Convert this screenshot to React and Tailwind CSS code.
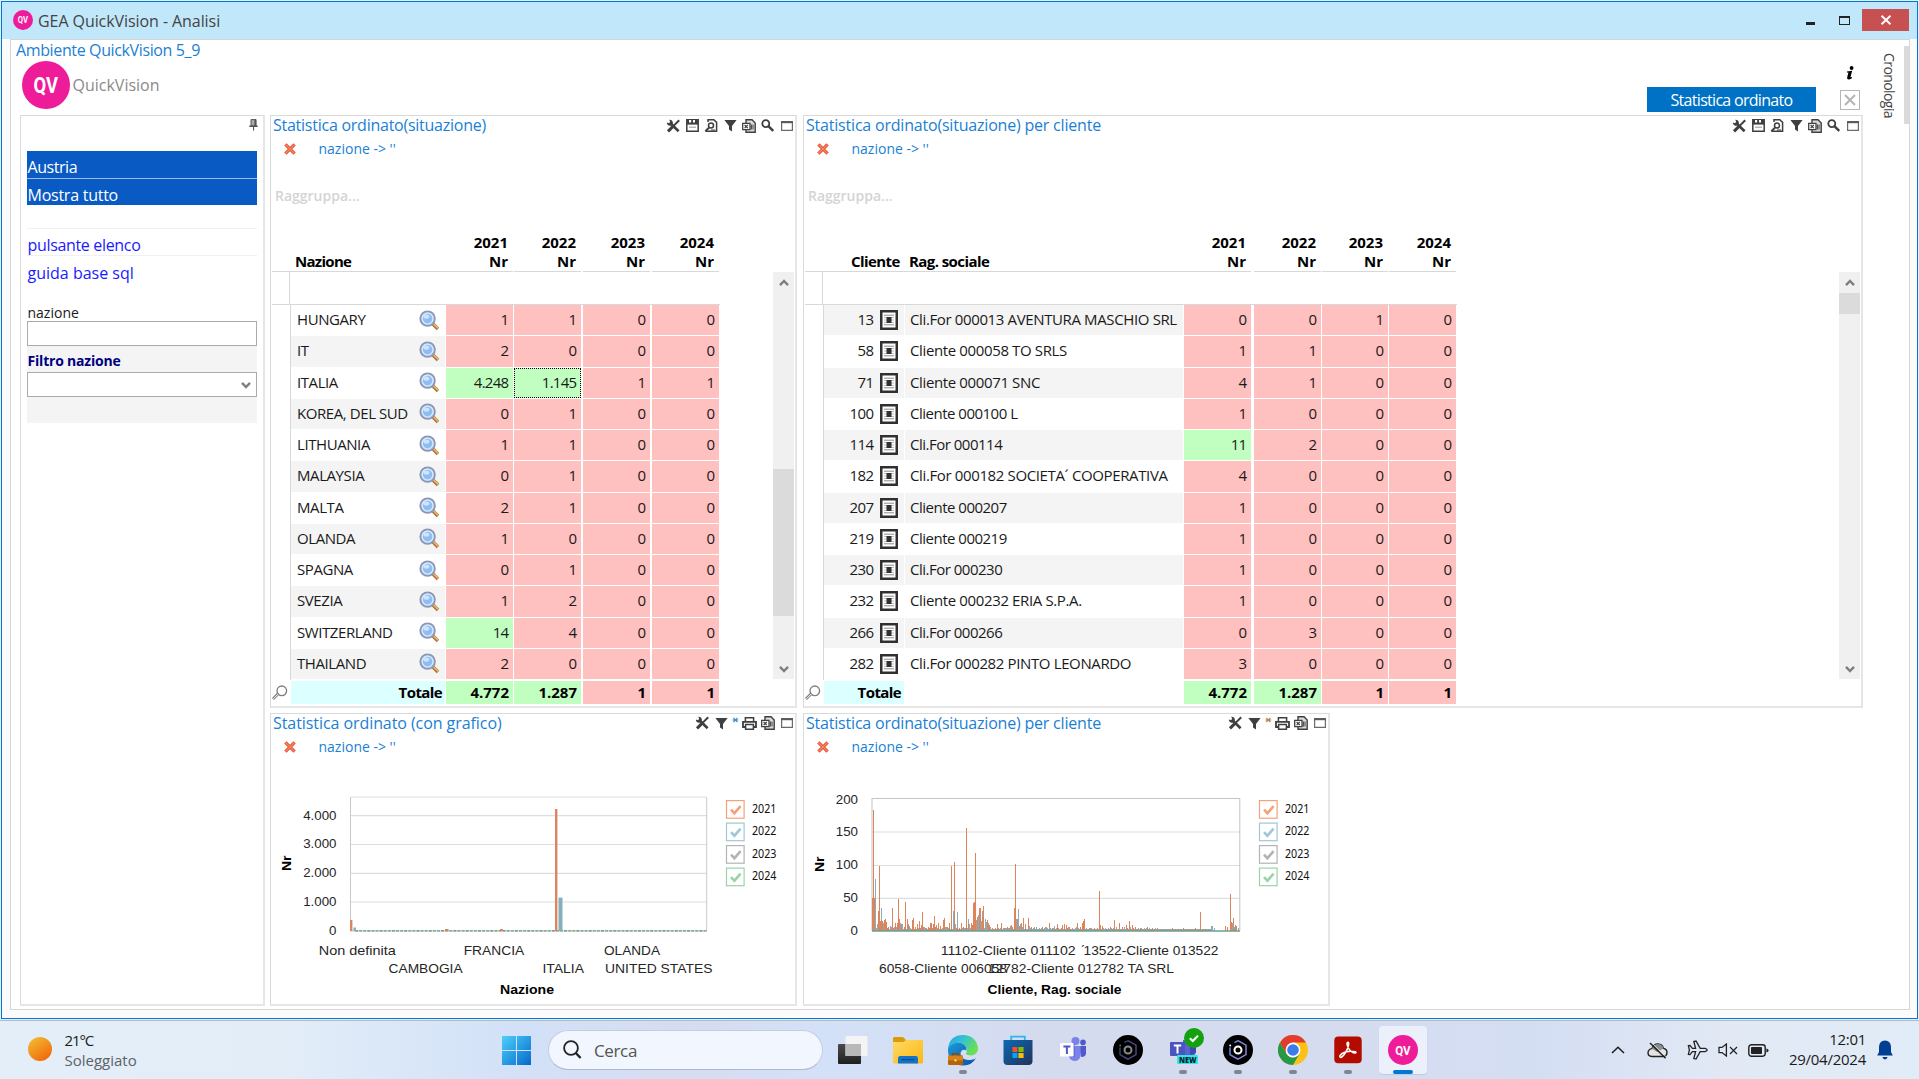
import React from "react";

const UI = "font-['Open_Sans','Noto_Sans',sans-serif]";

/* ---------- small toolbar glyphs ---------- */
const G = "#3f3f3f";
const Tools = () => (
  <svg width="15" height="14" viewBox="0 0 15 14">
    <path d="M13.2 1.2 L7.8 6.6" stroke={G} strokeWidth="2" />
    <path d="M6.8 7.6 L2 12.4" stroke={G} strokeWidth="3" />
    <path d="M4.2 4 L12.6 12.2" stroke={G} strokeWidth="2.6" />
    <path d="M3.2 .8 A3 3 0 1 1 .9 3.4 L3 4.2 L4.2 2.8Z" fill={G} />
  </svg>
);
const Save = () => (
  <svg width="13" height="13" viewBox="0 0 13 13">
    <path d="M.8 .8H12.2V12.2H.8Z" fill="#fff" stroke={G} strokeWidth="1.5" />
    <path d="M1 1H12V5.6H1Z" fill={G} />
    <path d="M3 1h2.2v2.6H3zM7 1h2v2.6H7z" fill="#fff" />
    <path d="M3 8.2h7" stroke="#999" />
  </svg>
);
const Preview = () => (
  <svg width="14" height="13" viewBox="0 0 14 13">
    <path d="M4 3V.8H9.8L12.6 3.4V12.2H1.5" fill="none" stroke={G} strokeWidth="1.5" />
    <circle cx="7" cy="6.6" r="2.5" fill="#fff" stroke={G} strokeWidth="1.5" />
    <path d="M5 8.6 L1.4 12.2" stroke={G} strokeWidth="2" />
    <path d="M7 11h4" stroke={G} />
  </svg>
);
const Funnel = () => (
  <svg width="13" height="13" viewBox="0 0 13 13">
    <path d="M.4 1H12.6L8 7V12.6L5 10.6V7Z" fill={G} />
  </svg>
);
const Xls = () => (
  <svg width="14" height="14" viewBox="0 0 14 14">
    <path d="M4 4V.8H10L13.2 4V13.2H4V11" fill="#ddd" stroke={G} strokeWidth="1.4" />
    <path d="M.7 4.4H8V10.6H.7Z" fill="#fff" stroke={G} strokeWidth="1.3" />
    <path d="M2.6 6 L5.8 9.2 M5.8 6 L2.6 9.2" stroke={G} strokeWidth="1.2" />
    <path d="M9.4 5.5v5M11 5.5v5" stroke={G} />
  </svg>
);
const Lens = () => (
  <svg width="13" height="13" viewBox="0 0 13 13">
    <circle cx="4.8" cy="4.6" r="3.5" fill="none" stroke={G} strokeWidth="1.8" />
    <path d="M7.4 7.2 L12.2 12" stroke={G} strokeWidth="2.4" />
  </svg>
);
const Win = () => (
  <svg width="12" height="10" viewBox="0 0 12 10">
    <path d="M.6 .6H11.4V9.4H.6Z" fill="#fff" stroke="#6a6a6a" strokeWidth="1.2" />
    <path d="M0 1.2H12" stroke="#5a5a5a" strokeWidth="2" />
  </svg>
);
const Printer = () => (
  <svg width="15" height="13" viewBox="0 0 15 13">
    <path d="M3.4 4.6V.8H11.6V4.6" fill="none" stroke={G} strokeWidth="1.5" />
    <path d="M3 10H1V4.8H14V10H12" fill="none" stroke={G} strokeWidth="1.8" />
    <path d="M3.6 7.6H11.4V12.2H3.6Z" fill="#fff" stroke={G} strokeWidth="1.5" />
  </svg>
);
const RedX = () => (
  <svg width="12" height="12" viewBox="0 0 12 12" className="mt-px">
    <path d="M1.4 1.4 L10.6 10.6 M10.6 1.4 L1.4 10.6" stroke="#e8593a" strokeWidth="3.4" />
    <path d="M1.6 1.6 L10.4 10.4 M10.4 1.6 L1.6 10.4" stroke="#f58a6a" strokeWidth="1.1" />
  </svg>
);
const BlueLens = () => (
  <svg width="21" height="21" viewBox="0 0 21 21">
    <path d="M13.5 13.5 L19 19" stroke="#a87238" strokeWidth="3.6" />
    <path d="M14 13.4 L19.2 18.4" stroke="#eab66e" strokeWidth="1.6" />
    <circle cx="8.6" cy="8.6" r="7.3" fill="#a9cdf6" stroke="#8c97b3" strokeWidth="1.8" />
    <circle cx="8.6" cy="8.6" r="5.4" fill="#8dbdf3" stroke="#dcebfb" strokeWidth="1.2" />
    <ellipse cx="7.4" cy="6.6" rx="3" ry="2.2" fill="#cfe4fc" />
  </svg>
);
const DocBox = () => (
  <svg width="18" height="20" viewBox="0 0 18 20">
    <rect x="1.25" y="1.25" width="15.5" height="17.5" fill="#fff" stroke="#303030" strokeWidth="2.5" />
    <path d="M4 5.2H14M4 14.8H14" stroke="#8a8a8a" />
    <path d="M4 7.5h10M4 10h10M4 12.5h10" stroke="#bdbdbd" />
    <rect x="6.5" y="7" width="5" height="6" fill="#303030" />
  </svg>
);
const ThinLens = () => (
  <svg width="16" height="16" viewBox="0 0 16 16">
    <circle cx="9.8" cy="5.8" r="4.8" fill="#fff" stroke="#7d7d7d" strokeWidth="1.3" />
    <path d="M6.4 8.6 L1 14" stroke="#7d7d7d" strokeWidth="2.8" />
    <path d="M6.2 9 L1.4 13.8" stroke="#fff" strokeWidth="1" />
  </svg>
);
const Chevron = ({ up }) => (
  <svg width="10" height="8" viewBox="0 0 10 8">
    <path d={up ? "M1 6.2 L5 2 L9 6.2" : "M1 1.8 L5 6 L9 1.8"} fill="none" stroke="#7f7f7f" strokeWidth="2.4" />
  </svg>
);

const Slot = ({ children }) => <span className="flex w-[18.8px] justify-center">{children}</span>;
const GridTools = () => (
  <div className="-mr-px flex h-[18px] items-center pt-px">
    <Slot><Tools /></Slot><Slot><Save /></Slot><Slot><Preview /></Slot><Slot><Funnel /></Slot>
    <Slot><Xls /></Slot><Slot><Lens /></Slot><Slot><Win /></Slot>
  </div>
);
const ChartTools = ({ star }) => (
  <div className="-mr-px flex h-[18px] items-center">
    <Slot><Tools /></Slot><Slot><Funnel /></Slot>
    <svg width="9" height="14" viewBox="0 0 9 14">
      <path d="M1.4 4H7.4M2.4 2L6.4 6M6.4 2L2.4 6" stroke={star} strokeWidth="1.1" />
    </svg>
    <Slot><Printer /></Slot><Slot><Xls /></Slot><Slot><Win /></Slot>
  </div>
);

function Panel({ title, track, tools, className, children }) {
  return (
    <section className={`flex flex-col overflow-hidden border-t border-r-2 border-b-2 border-l border-t-[#dadada] border-r-[#e6e6e6] border-b-[#e6e6e6] border-l-[#dadada] ${className}`}>
      <div className="flex h-[18px] justify-between">
        <h2 className={`pl-[2px] text-[16px] leading-[18px] whitespace-nowrap text-[#1a7fd4] ${track}`}>{title}</h2>
        {tools}
      </div>
      <div className="flex h-7 items-center pl-[13px]">
        <RedX />
        <span className="pt-px pl-[22.5px] text-[14px] leading-7 whitespace-pre text-[#1a7fd4]">nazione -&gt; ''</span>
      </div>
      {children}
    </section>
  );
}

function Scroll({ before, thumb }) {
  return (
    <div className="mr-px flex h-[407px] w-[21px] flex-col items-center bg-[#f0f0f0]">
      <div className="flex h-[21px] shrink-0 items-center"><Chevron up /></div>
      <div className={before} />
      <div className={`w-full bg-[#dbdbdb] ${thumb}`} />
      <div className="mt-auto flex h-[21px] items-center"><Chevron /></div>
    </div>
  );
}

const red = "bg-[#ffc0c0]";
const green = "bg-[#c0ffc0]";

function Cell({ v, size, ok, focus, bold }) {
  return (
    <div className={`h-full text-right ${size} ${ok ? green : red} ${bold ? "pr-1 font-bold" : "pr-[4.5px] tracking-[-0.7px]"} ${focus ? "outline-1 -outline-offset-1 outline-dotted outline-black" : ""}`}>
      {v}
    </div>
  );
}

const S1 = ["mr-px w-[67px]", "mr-[2px] w-[67px]", "mr-[2px] w-[67px]", "w-[67px]"];
const S2 = ["mr-[3px] w-[67px]", "mr-px w-[67px]", "mr-px w-[66px]", "w-[67px]"];
const YEARS = ["2021", "2022", "2023", "2024"];

const nations = [
  ["HUNGARY", "1", "1", "0", "0"], ["IT", "2", "0", "0", "0"], ["ITALIA", "4.248", "1.145", "1", "1"],
  ["KOREA, DEL SUD", "0", "1", "0", "0"], ["LITHUANIA", "1", "1", "0", "0"], ["MALAYSIA", "0", "1", "0", "0"],
  ["MALTA", "2", "1", "0", "0"], ["OLANDA", "1", "0", "0", "0"], ["SPAGNA", "0", "1", "0", "0"],
  ["SVEZIA", "1", "2", "0", "0"], ["SWITZERLAND", "14", "4", "0", "0"], ["THAILAND", "2", "0", "0", "0"],
];
const clients = [
  ["13", "Cli.For 000013 AVENTURA MASCHIO SRL", "0", "0", "1", "0"], ["58", "Cliente 000058 TO SRLS", "1", "1", "0", "0"],
  ["71", "Cliente 000071 SNC", "4", "1", "0", "0"], ["100", "Cliente 000100 L", "1", "0", "0", "0"],
  ["114", "Cli.For 000114", "11", "2", "0", "0"], ["182", "Cli.For 000182 SOCIETA´ COOPERATIVA", "4", "0", "0", "0"],
  ["207", "Cliente 000207", "1", "0", "0", "0"], ["219", "Cliente 000219", "1", "0", "0", "0"],
  ["230", "Cli.For 000230", "1", "0", "0", "0"], ["232", "Cliente 000232 ERIA S.P.A.", "1", "0", "0", "0"],
  ["266", "Cli.For 000266", "0", "3", "0", "0"], ["282", "Cli.For 000282 PINTO LEONARDO", "3", "0", "0", "0"],
];
const isOk = (v) => parseFloat(v.replace(".", "")) > 10;

function Totals({ sizes, children }) {
  return (
    <div className="mt-px flex h-[23px] pl-px text-[15px] leading-[22px] text-black">
      <div className="flex w-[19px] items-center"><ThinLens /></div>
      {children}
      {["4.772", "1.287", "1", "1"].map((v, i) => <Cell key={i} v={v} size={sizes[i]} ok={i < 2} bold />)}
    </div>
  );
}

function YearHeads({ sizes }) {
  return YEARS.map((y, i) => (
    <div key={y} className={`pr-[5px] text-right ${sizes[i]} border-b border-[#d8d8d8]`}>
      <div className="-mt-px">{y}</div>
      <div>Nr</div>
    </div>
  ));
}

function NationGrid() {
  return (
    <div className="pt-[20px] text-[15px] text-[#1a1a1a]">
      <div className="pl-1 text-[14px] leading-7 font-semibold text-[#d4d4d4]">Raggruppa...</div>
      <div className="mt-[24px] flex h-[38px] leading-[18.5px] font-bold text-black">
        <div className="ml-px flex w-[174px] items-end border-b border-[#d8d8d8] pb-px pl-[23px] tracking-[-0.7px]">Nazione</div>
        <YearHeads sizes={S1} />
      </div>
      <div className="flex justify-between">
        <div>
          <div className="ml-px flex h-[33px] w-[448px] border-b border-[#d8d8d8]"><div className="w-[18px] border-r border-[#d8d8d8]" /></div>
          <div className="ml-[19px] border-l border-[#d8d8d8]">
            {nations.map((r, i) => (
              <div key={r[0]} className="flex h-[31.25px] pb-px leading-[28px]">
                <div className={`flex w-[155px] justify-between border-r border-white pr-[5px] pl-[6px] tracking-[-0.42px] ${i % 2 ? "bg-[#f4f4f4]" : ""}`}>
                  {r[0]}
                  <span className="pt-[4.5px]"><BlueLens /></span>
                </div>
                {r.slice(1).map((v, k) => <Cell key={k} v={v} size={S1[k]} ok={isOk(v)} focus={i === 2 && k === 1} />)}
              </div>
            ))}
          </div>
        </div>
        <Scroll before="h-[176px] shrink-0" thumb="h-[147px] shrink-0" />
      </div>
      <Totals sizes={S1}>
        <div className="mr-px w-[154px] bg-[#dcffff] pr-[3px] text-right font-bold tracking-[-0.6px]">Totale</div>
      </Totals>
    </div>
  );
}

function ClientGrid() {
  return (
    <div className="pt-[20px] text-[15px] text-[#1a1a1a]">
      <div className="pl-1 text-[14px] leading-7 font-semibold text-[#d4d4d4]">Raggruppa...</div>
      <div className="mt-[24px] flex h-[38px] leading-[18.5px] font-bold text-black">
        <div className="ml-px flex w-[379px] items-end border-b border-[#d8d8d8] pb-px pl-[46px] tracking-[-0.58px]">
          <span className="w-[58px]">Cliente</span>
          <span>Rag. sociale</span>
        </div>
        <YearHeads sizes={S2} />
      </div>
      <div className="flex justify-between">
        <div>
          <div className="ml-px flex h-[33px] w-[652px] border-b border-[#d8d8d8]"><div className="w-[18px] border-r border-[#d8d8d8]" /></div>
          <div className="ml-[19px] border-l border-[#d8d8d8]">
            {clients.map((r, i) => (
              <div key={r[0]} className="flex h-[31.25px] pb-px leading-[28px]">
                <div className={`mr-px flex w-[80px] justify-end gap-[6.5px] pr-[6px] tracking-[-0.6px] ${i % 2 ? "" : "bg-[#f4f4f4]"}`}>
                  {r[0]}
                  <span className="pt-[5px]"><DocBox /></span>
                </div>
                <div className={`mr-px w-[278px] pl-[5px] whitespace-nowrap ${/[A-Z]{3}/.test(r[1]) ? "tracking-[-0.37px]" : "tracking-[-0.5px]"} ${i % 2 ? "" : "bg-[#f4f4f4]"}`}>{r[1]}</div>
                {r.slice(2).map((v, k) => <Cell key={k} v={v} size={S2[k]} ok={isOk(v)} />)}
              </div>
            ))}
          </div>
        </div>
        <Scroll before="h-0" thumb="h-[21px] shrink-0" />
      </div>
      <Totals sizes={S2}>
        <div className="mr-[280px] w-[80px] bg-[#dcffff] pr-[3px] text-right font-bold tracking-[-0.6px]">Totale</div>
      </Totals>
    </div>
  );
}

/* ---------- charts ---------- */
const LEG = [["2021", "#f5a27a"], ["2022", "#9fc8d6"], ["2023", "#b3b3b3"], ["2024", "#9bd3a8"]];
function Legend({ x }) {
  return LEG.map(([y, c], i) => (
    <g key={y}>
      <rect x={x + 0.5} y={800.6 + i * 22.5} width="17.6" height="17.6" fill="#fff" stroke={c} strokeWidth="1.2" />
      <path d={`M${x + 5} ${809.6 + i * 22.5} l3.4 3.6 l6.2 -7`} fill="none" stroke={c} strokeWidth="2.6" />
      <text x={x + 26} y={812.6 + i * 22.5} fontSize="12" textLength="24.5" lengthAdjust="spacingAndGlyphs" fill="#111" className="font-['Noto_Sans',sans-serif]">{y}</text>
    </g>
  ));
}
const Lb = ({ x, y, w, t, b, end }) => (
  <text x={x} y={y} fontSize="13.3" textLength={w} lengthAdjust="spacingAndGlyphs" textAnchor={end ? "end" : "start"} fontWeight={b ? 700 : 400} fill={b ? "#000" : "#262626"}>{t}</text>
);

function NationChart() {
  const dashes = Array.from({ length: 86 }, (_, i) => 355 + i * 4.1);
  return (
    <svg width="525" height="244" viewBox="271 760 525 244" className="shrink-0 font-['Liberation_Sans',Arial,sans-serif]">
      <path d="M350.5 797H706.5M350 815.7H707M350 844.5H707M350 873.3H707M350 902H707" stroke="#dedede" strokeWidth="1.2" />
      <path d="M350.5 797V931H706.7V797" fill="none" stroke="#c9c9c9" />
      {["4.000", "3.000", "2.000", "1.000", "0"].map((t, i) => <Lb key={t} x={336.5} y={819.6 + i * 28.8} t={t} end />)}
      {dashes.map((x, i) => <rect key={x} x={x} y="930" width="3" height="1.6" fill={i % 3 ? "#7fae92" : "#7d9aa0"} />)}
      <g fill="#dd845b">
        <rect x="350" y="920" width="2.4" height="11" />
        <rect x="445" y="929" width="3.5" height="2" />
        <rect x="500" y="929" width="3" height="2" />
        <rect x="555" y="809" width="2.4" height="122" />
      </g>
      <g fill="#86afbd">
        <rect x="353.5" y="927.5" width="2.4" height="3.5" />
        <rect x="558.5" y="897.6" width="4" height="33.4" />
      </g>
      <Lb x={318.8} y={955} w={77} t="Non definita" />
      <Lb x={463.7} y={955} w={60.5} t="FRANCIA" />
      <Lb x={604} y={955} w={56} t="OLANDA" />
      <Lb x={388.6} y={972.6} w={74} t="CAMBOGIA" />
      <Lb x={542.5} y={972.6} w={41.5} t="ITALIA" />
      <Lb x={605} y={972.6} w={107.5} t="UNITED STATES" />
      <Lb x={500} y={994} w={54} t="Nazione" b />
      <text transform="translate(290.5 871) rotate(-90)" fontSize="13.3" fontWeight="700" textLength="15.5" lengthAdjust="spacingAndGlyphs">Nr</text>
      <Legend x={726} />
    </svg>
  );
}

/* [offset from the left edge of the plot, value in px] */
const orange = "0,33 1,121 2,33 6,20 7,65 8,10 9,11 10,10 12,11 13,12 14,9 16,4 20,23 23,8 25,8 26,32 27,12 29,7 32,4 33,29 35,12 36,6 40,11 41,13 43,4 45,7 47,10 49,6 50,19 51,4 56,4 58,8 59,8 61,7 62,15 64,6 66,8 68,5 71,11 72,13 75,4 77,8 79,65 82,69 85,4 89,8 91,4 94,103 96,7 99,8 100,6 101,28 102,29 103,78 105,14 107,23 108,23 110,14 111,25 115,11 116,8 117,6 120,3 125,7 129,8 132,3 135,4 138,5 139,6 142,23 143,67 145,12 147,5 149,8 151,13 153,7 156,13 159,4 170,4 177,8 185,7 190,6 192,7 194,6 197,4 205,8 208,4 210,8 211,10 212,12 218,3 227,40 228,6 230,5 238,4 242,11 247,8 250,4 254,6 257,10 260,6 263,4 268,3 275,4 280,3 300,3 311,3 323,3 328,19 353,5 355,4 358,37 359,9 361,13 363,6 364,5".split(" ").map((p) => p.split(",").map(Number));
const blue = "3,52 5,7 9,23 11,8 18,5 22,4 24,4 28,8 30,7 36,7 37,5 43,3 53,3 66,3 73,4 81,20 83,7 85,19 90,3 96,12 97,7 103,17 104,11 106,16 109,10 110,20 113,12 114,9 133,3 144,12 146,22 148,7 150,4 157,5 164,4 174,4 182,5 196,4 204,4 219,3 231,3 244,4 252,4 258,4 339,5 340,5 342,3 360,8 361,11 362,4 364,4 366,3".split(" ").map((p) => p.split(",").map(Number));

function ClientChart() {
  const noise = Array.from({ length: 340 }, (_, i) => [i, 1.6 + ((i * 37) % 11) / 6 * (i > 285 ? 0.3 : i > 180 ? 0.8 : 1.2)]);
  return (
    <svg width="525" height="244" viewBox="804 760 525 244" className="shrink-0 font-['Liberation_Sans',Arial,sans-serif]">
      <path d="M871.5 798.5H1240M872 832H1240M872 865.5H1240M872 898.3H1240" stroke="#dedede" strokeWidth="1.2" />
      <path d="M872 931V798.5H1239.8V931" fill="none" stroke="#c4c4c4" />
      {["200", "150", "100", "50", "0"].map((t, i) => <Lb key={t} x={858} y={803.6 + i * 32.8} t={t} end />)}
      <g shapeRendering="crispEdges">
        {noise.map(([x, h]) => <rect key={x} x={872 + x} y={931 - h} width="1" height={h} fill={x % 3 ? "#86afbd" : "#dd845b"} />)}
        {blue.map(([x, h]) => <rect key={x} x={872 + x} y={931 - h} width="1" height={h} fill="#86afbd" />)}
        {orange.map(([x, h]) => <rect key={x} x={872 + x} y={931 - h} width="1" height={h} fill="#dd845b" />)}
      </g>
      <path d="M872 931H1240" stroke="#6e9c90" strokeWidth="1.6" />
      <Lb x={940.7} y={955} w={135} t="11102-Cliente 011102" />
      <Lb x={1081} y={955} t="´" />
      <Lb x={1083.5} y={955} w={135} t="13522-Cliente 013522" />
      <Lb x={879} y={972.6} w={128} t="6058-Cliente 006058" />
      <Lb x={988} y={972.6} w={186} t="12782-Cliente 012782 TA SRL" />
      <Lb x={987.5} y={994} w={134} t="Cliente, Rag. sociale" b />
      <text transform="translate(824 872) rotate(-90)" fontSize="13.3" fontWeight="700" textLength="15.5" lengthAdjust="spacingAndGlyphs">Nr</text>
      <Legend x={1259} />
    </svg>
  );
}

/* ---------- sidebar ---------- */
function Sidebar() {
  return (
    <aside className="flex h-[891px] w-[245px] flex-col border-t border-r-2 border-b-2 border-l border-t-[#dadada] border-r-[#e6e6e6] border-b-[#e6e6e6] border-l-[#dadada] pr-[6px] pl-[6px] text-[16px]">
      <div className="-mr-px flex h-[35px] justify-end pt-[3px]">
        <svg width="9" height="12" viewBox="0 0 9 12">
          <path d="M2 .6H7V7H2Z" fill="#aaa" stroke="#555" />
          <path d="M5.4 .6H7.2V7H5.4ZM.3 6.6H8.7V8H.3ZM4 8h1.1v3.4H4Z" fill="#555" />
        </svg>
      </div>
      <div className="h-[27px] bg-[#0a5ac4] pt-[7px] pl-[0.5px] leading-[19px] tracking-[-0.45px] text-white">Austria</div>
      <div className="h-[27px] border-t border-[#9dbbe4] bg-[#0a5ac4] pt-[7px] pl-[0.5px] leading-[19px] tracking-[-0.25px] text-white">Mostra tutto</div>
      <div className="mt-[23px] h-[28px] border-t border-b border-[#f0f0f0] pt-[6px] pl-[0.5px] leading-[20px] tracking-[-0.33px] text-[#1a1aff]">pulsante elenco</div>
      <div className="mt-[7px] pl-[0.5px] leading-[20px] text-[#1a1aff]">guida base sql</div>
      <div className="mt-[21px] pl-[0.5px] leading-[18px] text-[14px] text-[#1a1a1a]">nazione</div>
      <div className="-mt-px h-[25px] w-[230px] border border-[#ababab] bg-white" />
      <div className="h-[77px] w-[230px] bg-[#f4f4f4] pt-[5px]">
        <div className="pl-[0.5px] text-[14px] leading-[20px] font-bold tracking-[-0.2px] text-[#000080]">Filtro nazione</div>
        <div className="mt-px flex h-[25px] items-center justify-end border border-[#ababab] bg-white pr-[5px]"><Chevron /></div>
      </div>
    </aside>
  );
}

const QV = ({ s }) => (
  <svg width={s} height={s} viewBox="0 0 48 48">
    <circle cx="24" cy="24" r="24" fill="#ee1c99" />
    <text x="11.6" y="31.6" fontSize="21.5" fontWeight="700" textLength="24.5" lengthAdjust="spacingAndGlyphs" fill="#fff" className="font-['Roboto','Open_Sans',sans-serif]">QV</text>
  </svg>
);

/* ---------- taskbar ---------- */
const Orb = ({ dim }) => (
  <svg width="30" height="30" viewBox="0 0 30 30" className={dim ? "blur-[0.7px]" : ""}>
    <circle cx="15" cy="15" r="15" fill="#000" />
    <path d="M15 5.6 L23 10.2 V19.6 L15 24.2 L11 22" fill="none" stroke={dim ? "#4c4780" : "#8d84d8"} strokeWidth="1.5" />
    <path d="M11.5 7.6 L15 5.6M7 12.5V19.6L11 22" fill="none" stroke={dim ? "#33436e" : "#6a8be0"} strokeWidth="1.5" />
    <circle cx="15" cy="15" r="3.5" fill="none" stroke={dim ? "#8a8a8a" : "#fff"} strokeWidth="2" />
    <circle cx="7.2" cy="10.4" r="1" fill={dim ? "#667" : "#fff"} />
  </svg>
);
const TaskView = () => (
  <svg width="30" height="30" viewBox="0 0 30 30">
    <defs><linearGradient id="tv" x1="0" y1="0" x2="0" y2="1"><stop stopColor="#4a4a4a" /><stop offset="1" stopColor="#1f1f1f" /></linearGradient></defs>
    <rect x="0" y="9" width="23" height="20" rx="1" fill="url(#tv)" />
    <rect x="7.5" y="1" width="22" height="20" rx="1" fill="#f4f4f4" />
    <path d="M7.5 9H23V21H7.5Z" fill="#b9b9b9" />
  </svg>
);
const Folder = () => (
  <svg width="30" height="30" viewBox="0 0 30 30">
    <defs><linearGradient id="fo" x1="0" y1="0" x2="1" y2="1"><stop stopColor="#ffd968" /><stop offset="1" stopColor="#fbb90f" /></linearGradient></defs>
    <path d="M0 3.4Q0 2 1.4 2H10L13 5H28.6Q30 5 30 6.4V10H0Z" fill="#dc9a0b" />
    <path d="M0 7H10.5L13 5H28.8Q30 5 30 6.2V27Q30 28.6 28.4 28.6H1.6Q0 28.6 0 27Z" fill="url(#fo)" />
    <path d="M5 28.6V23.4Q5 21 7.4 21H22.6Q25 21 25 23.4V28.6Z" fill="#1273c9" />
    <path d="M9 24.6H21" stroke="#0a4c92" strokeWidth="1.2" strokeLinecap="round" />
  </svg>
);
const Edge = () => (
  <svg width="30" height="31" viewBox="0 0 30 31">
    <defs>
      <linearGradient id="e1" x1="0" y1="0" x2="1" y2=".5"><stop stopColor="#2aa4dd" /><stop offset=".5" stopColor="#35c3d0" /><stop offset="1" stopColor="#6adf52" /></linearGradient>
      <linearGradient id="e2" x1="0" y1="0" x2="1" y2="1"><stop stopColor="#1a9be4" /><stop offset="1" stopColor="#0f4f9e" /></linearGradient>
    </defs>
    <path d="M0 14Q1 7 9 7Q19 8 18.6 15.5Q14 13 12.5 18Q12.5 24 20 25Q26 25 28 23Q24 30.5 15 30.5Q2 30 0 17Z" fill="url(#e2)" />
    <path d="M0 13.4Q2 0 15 0Q28 .6 30 13Q30 19.6 23.4 20.4Q17.6 20.4 18 18.6Q20 16 17.4 11Q13 5.6 6.6 8.4Q1.6 10 0 13.4Z" fill="url(#e1)" />
    <rect x="0" y="20.6" width="15" height="9.4" rx="1" fill="#b76206" />
    <path d="M0 20.6H15V25.4H0Z" fill="#d98217" />
    <path d="M4.6 20.4V18.8H10.4V20.4" fill="none" stroke="#8c4a05" strokeWidth="1.4" />
    <circle cx="7.5" cy="25.4" r="1.1" fill="#ffe59b" />
  </svg>
);
const Store = () => (
  <svg width="30" height="30" viewBox="0 0 30 30">
    <defs><linearGradient id="st" x1="0" y1="0" x2="1" y2="1"><stop stopColor="#0c69b4" /><stop offset="1" stopColor="#223358" /></linearGradient></defs>
    <path d="M8.2 5.4V1.6H21.8V5.4" fill="none" stroke="#2fb6ee" strokeWidth="1.8" />
    <path d="M.5 5H29.5V26Q29.5 30 25.5 30H4.5Q.5 30 .5 26Z" fill="url(#st)" />
    <path d="M9.4 12H14.4V17H9.4Z" fill="#f35325" /><path d="M15.4 12H20.6V17H15.4Z" fill="#81bc06" />
    <path d="M9.4 18H14.4V23H9.4Z" fill="#05a6f0" /><path d="M15.4 18H20.6V23H15.4Z" fill="#ffba08" />
  </svg>
);
const Teams = () => (
  <svg width="27" height="26" viewBox="0 0 27 26">
    <circle cx="15.5" cy="4" r="4" fill="#7b83eb" /><circle cx="23" cy="5.4" r="2.8" fill="#5059c9" />
    <path d="M19 9H26V16.5Q25.6 20 21 20Z" fill="#5059c9" />
    <path d="M9 9H20.5V18Q20 24 14.6 24Q9.6 23.6 9 19Z" fill="#7b83eb" />
    <path d="M8 6.4H14.6V20H9Z" fill="#4a52b8" opacity=".6" />
    <rect x="0" y="6" width="13.6" height="13.4" rx="1" fill="#fff" />
    <path d="M3.4 9.4H10.4M6.9 9.4V17" stroke="#5059c9" strokeWidth="2" />
  </svg>
);
const TeamsNew = () => (
  <svg width="36" height="38" viewBox="0 0 36 38">
    <path d="M14 12H27V24Q26 29 20 29Q14 29 14 24Z" fill="#5b63d3" /><path d="M21 12H27V24Q26 26 21 27Z" fill="#4149b0" />
    <rect x="1" y="14" width="15" height="14" rx="1" fill="#4b53bc" />
    <path d="M4.8 17.6H12.2M8.5 17.6V25.4" stroke="#fff" strokeWidth="2" />
    <circle cx="25" cy="10" r="10" fill="#13a10e" />
    <path d="M20.8 10.2L23.8 13L29 7.6" fill="none" stroke="#fff" strokeWidth="2" />
    <rect x="8" y="27" width="21" height="9" rx="1" fill="#30e5e8" />
    <text x="10" y="34.6" fontSize="8" fontWeight="800" textLength="17.5" lengthAdjust="spacingAndGlyphs" fill="#05212b" className="font-['Open_Sans',sans-serif]">NEW</text>
  </svg>
);
const Chrome = () => (
  <svg width="30" height="30" viewBox="0 0 30 30">
    <circle cx="15" cy="15" r="15" fill="#fbc116" />
    <path d="M2 7.5A15 15 0 0 1 28 7.5H15L8.5 18.7Z" fill="#e33b2e" />
    <path d="M2 7.5L8.5 18.7 Q11 22.4 15 22.5 L21.5 18.8 L15 30A15 15 0 0 1 2 7.5Z" fill="#279847" />
    <circle cx="15" cy="15" r="7.4" fill="#fff" /><circle cx="15" cy="15" r="5.8" fill="#3a7cec" />
  </svg>
);
const Acrobat = () => (
  <svg width="28" height="28" viewBox="0 0 28 28">
    <rect x=".3" y=".6" width="27.4" height="26.6" rx="4" fill="#b30b00" />
    <path d="M6 19.6C8.6 15.6 15.6 14.4 21.6 15.8C23.2 17.2 19 18.4 15.4 13.6C12.8 10 12.4 6.4 13.8 6.2C15.6 6.2 14.6 11.2 12 15.6C9.6 20.2 7 22 6.2 21.2C5.8 20.8 5.6 20.4 6 19.6Z" fill="none" stroke="#fff" strokeWidth="1.5" />
  </svg>
);

function Task({ children, running, active }) {
  return (
    <div className="flex w-[55px] justify-center pt-[5px]">
      <div className={`flex h-12 w-12 flex-col items-center rounded ${active ? "bg-[#ecf0fa] shadow-[0_1px_1px_#00000018]" : ""}`}>
        <div className="flex h-[44px] shrink-0 items-center justify-center pt-[4px]">{children}</div>
        {running && <div className="h-1 w-2 rounded-full bg-[#80858f]" />}
        {active && <div className="h-1 w-5 rounded-full bg-[#0078d4]" />}
      </div>
    </div>
  );
}

function Taskbar() {
  return (
    <footer className="flex h-[59px] border-t border-[#b4bac4] bg-[linear-gradient(90deg,#e3eef8_0%,#e2edf8_15%,#d2e1f8_27%,#d6dcf1_36%,#d3e1f8_43%,#d5dbef_54%,#d5dcf0_70%,#d4def3_80%,#e2e9f5_90%,#e0ecf7_100%)] text-[16px] text-[#1b1b1b]">
      <div className="flex w-[502px] pt-[16px] pl-[28px]">
        <svg width="24" height="24" viewBox="0 0 24 24">
          <defs><linearGradient id="sun" x1="0.1" y1="0" x2=".8" y2="1"><stop stopColor="#f2bf32" /><stop offset="1" stopColor="#f0650c" /></linearGradient></defs>
          <circle cx="12" cy="12" r="12" fill="url(#sun)" />
        </svg>
        <div className="-mt-[7px] pl-[12.5px] text-[15px] leading-[20px]">
          <div className="tracking-[-1.1px]">21°C</div>
          <div className="text-[#5c6268]">Soleggiato</div>
        </div>
      </div>
      <svg width="29" height="29" viewBox="0 0 29 29" className="mt-[15px]">
        <defs><linearGradient id="wl" x1="0" y1="0" x2="1" y2="1"><stop stopColor="#4fd0fb" /><stop offset="1" stopColor="#0469cb" /></linearGradient></defs>
        <path d="M0 0H14V14H0ZM15 0H29V14H15ZM0 15H14V29H0ZM15 15H29V29H15Z" fill="url(#wl)" />
      </svg>
      <div className="mt-[9px] ml-[17px] flex h-[40px] w-[275px] items-center rounded-full border border-[#c5cde0] border-b-[#b0b8cc] bg-[#f2f6fe] pl-[14px]">
        <svg width="19" height="20" viewBox="0 0 19 20"><circle cx="8" cy="8" r="6.9" fill="none" stroke="#222" strokeWidth="1.8" /><path d="M12.8 13L17.6 18" stroke="#222" strokeWidth="2.4" /></svg>
        <span className="pt-px pl-[12px] text-[17px] leading-[38px] tracking-[-0.36px] text-[#555]">Cerca</span>
      </div>
      <div className="ml-[2.5px] flex">
        <Task><TaskView /></Task><Task><Folder /></Task><Task running><Edge /></Task><Task><Store /></Task>
        <Task><Teams /></Task><Task><Orb dim /></Task>
        <Task running><div className="-mt-[6px] ml-[8px]"><TeamsNew /></div></Task>
        <Task running><Orb /></Task><Task running><Chrome /></Task><Task running><Acrobat /></Task><Task active><QV s={30} /></Task>
      </div>
      <div className="ml-auto flex items-center pr-[26px]">
        <svg width="14" height="8" viewBox="0 0 14 8"><path d="M1 7L7 1.2L13 7" fill="none" stroke="#1b1b1b" strokeWidth="1.5" /></svg>
        <svg width="21" height="17" viewBox="0 0 21 17" className="ml-[22px]">
          <path d="M5 14.5Q1 14.5 1 10.6Q1.4 7 5 6.6Q6.6 2 11 2Q15.4 2.2 16.4 6.4Q20 7 20 10.6Q19.6 14.5 16 14.5Z" fill="#e4e4e4" stroke="#222" strokeWidth="1.4" />
          <path d="M5 6.6Q6.6 2 11 2Q15.4 2.2 16.4 6.4L10 10Z" fill="#8c8c8c" />
          <path d="M3 1L18.6 16.2" stroke="#222" strokeWidth="1.5" /><path d="M4.4 .4L20 15.6" stroke="#e2ebf6" strokeWidth=".8" />
        </svg>
        <svg width="21" height="20" viewBox="0 0 21 20" className="ml-[19px]">
          <path d="M1.4 5.6L3 5.4L5.4 8.4H8.6L6.8 1.4L9 1L13.2 8.4H18Q20.2 9 20.2 10Q20.2 11 18 11.6H13.2L9 19L6.8 18.6L8.6 11.6H5.4L3 14.6L1.4 14.4L2.4 10Z" fill="none" stroke="#222" strokeWidth="1.3" />
        </svg>
        <svg width="20" height="14" viewBox="0 0 20 14" className="ml-[10px]">
          <path d="M1 4.4H4L8.4 1V13L4 9.6H1Z" fill="none" stroke="#222" strokeWidth="1.3" /><path d="M12 4L19 11M19 4L12 11" stroke="#222" strokeWidth="1.2" />
        </svg>
        <svg width="21" height="13" viewBox="0 0 21 13" className="ml-[10px]">
          <rect x=".8" y=".8" width="16.4" height="11.4" rx="2.6" fill="none" stroke="#222" strokeWidth="1.4" /><rect x="3" y="3" width="11" height="7" rx=".8" fill="#222" /><path d="M18.4 4.4Q20.6 5 20.6 6.5Q20.6 8 18.4 8.6Z" fill="#222" />
        </svg>
        <div className="ml-[20px] pb-[3px] text-right text-[15px] leading-[20px] tracking-[-0.25px]">
          <div className="tracking-[-0.3px]">12:01</div><div>29/04/2024</div>
        </div>
        <svg width="16" height="20" viewBox="0 0 16 20" className="ml-[11px]">
          <path d="M8 .6Q13.8 1 14 7V12L15.8 15.4H.2L2 12V7Q2.2 1 8 .6Z" fill="#003f92" /><path d="M5.4 17H10.6Q10 19.4 8 19.4Q6 19.4 5.4 17Z" fill="#003f92" />
        </svg>
      </div>
    </footer>
  );
}

export default function App() {
  return (
    <div className={`flex h-[1079px] w-[1919px] flex-col overflow-hidden bg-[#e4eef8] pt-px ${UI}`}>
      <main className="ml-px flex h-[1018px] w-[1917px] flex-col border border-[#0078d4] bg-[#fbfbfb]">
        <div className="flex h-[37px] shrink-0 items-start bg-[#c1e7fa] pr-[8px] pl-[11px]">
          <div className="mt-[8px]"><QV s={20} /></div>
          <h1 className="mt-[8px] ml-[5px] text-[16px] leading-[22px] tracking-[-0.07px] text-[#444]">GEA QuickVision - Analisi</h1>
          <div className="ml-auto flex h-full">
            <div className="mt-[20px] h-[3px] w-[9px] bg-[#222]" />
            <div className="mt-[14px] ml-[24px] h-[9px] w-[11px] border border-t-2 border-[#222]" />
            <div className="mt-[7px] ml-[12px] flex h-[22px] w-[47px] items-center justify-center bg-[#c75050]">
              <svg width="12" height="10" viewBox="0 0 12 10"><path d="M1.5 .8L10.5 9.2M10.5 .8L1.5 9.2" stroke="#fff" strokeWidth="2" /></svg>
            </div>
          </div>
        </div>
        <div className="ml-[8px] flex h-[971px] w-[1900px] border border-[#d6d6d6] bg-white">
          <div className="w-[1852px]">
            <header className="flex h-[75px] justify-between">
              <div>
                <div className="pl-[5px] text-[16px] leading-[20px] tracking-[-0.37px] text-[#1a7fd4]">Ambiente QuickVision 5_9</div>
                <div className="flex items-center pl-[11px]">
                  <QV s={48} />
                  <span className="pt-px pl-[2.5px] text-[16px] leading-[49px] text-[#8a8a8a]">QuickVision</span>
                </div>
              </div>
              <div className="flex items-end pr-[3px]">
                <button className="mr-[24px] mb-[3px] h-[25px] w-[169px] bg-[#0072c6] pt-px text-[16px] leading-[25px] tracking-[-0.7px] text-white">Statistica ordinato</button>
                <div className="mb-[5px] flex w-[20px] flex-col items-center">
                  <svg width="8" height="14" viewBox="0 0 8 14" className="mb-[10px]"><circle cx="5.6" cy="2" r="1.9" /><path d="M1 5.4L6.2 4.8L4.4 11.2L6 11L5.6 12.4Q3 14 1.4 13Q.8 12 1.4 10.4L2.4 6.6L.8 6.6Z" /></svg>
                  <div className="flex h-5 w-5 items-center justify-center border border-[#b5b5b5]">
                    <svg width="12" height="12" viewBox="0 0 12 12"><path d="M1 1L11 11M11 1L1 11" stroke="#b5b5b5" strokeWidth="2" /></svg>
                  </div>
                </div>
              </div>
            </header>
            <div className="flex gap-[5px] pl-[9px]">
              <Sidebar />
              <div className="flex flex-col gap-[5px]">
                <div className="flex gap-[6px]">
                  <Panel title="Statistica ordinato(situazione)" track="tracking-[-0.25px]" tools={<GridTools />} className="h-[593px] w-[527px]"><NationGrid /></Panel>
                  <Panel title="Statistica ordinato(situazione) per cliente" track="tracking-[-0.2px]" tools={<GridTools />} className="h-[593px] w-[1060px]"><ClientGrid /></Panel>
                </div>
                <div className="flex gap-[6px]">
                  <Panel title="Statistica ordinato (con grafico)" track="tracking-[-0.07px]" tools={<ChartTools star="#4a90c8" />} className="h-[293px] w-[527px]"><NationChart /></Panel>
                  <Panel title="Statistica ordinato(situazione) per cliente" track="tracking-[-0.2px]" tools={<ChartTools star="#b08a4a" />} className="h-[293px] w-[527px]"><ClientChart /></Panel>
                </div>
              </div>
            </div>
          </div>
          <div className="flex flex-1 justify-between pt-[6px] pl-[16px]">
            <span className="pt-[7px] text-[14px] leading-[20px] tracking-[-0.58px] text-[#444] [writing-mode:vertical-rl]">Cronologia</span>
            <div className="h-[78px] w-[5px] bg-[#dbdbdb]" />
          </div>
        </div>
      </main>
      <div className="h-px" />
      <Taskbar />
    </div>
  );
}
